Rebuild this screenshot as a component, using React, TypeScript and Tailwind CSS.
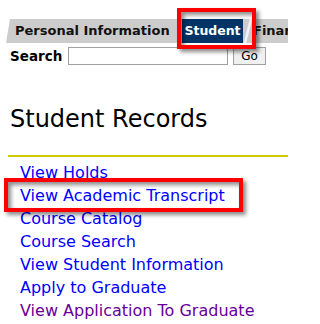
const links = [
  "View Holds",
  "View Academic Transcript",
  "Course Catalog",
  "Course Search",
  "View Student Information",
  "Apply to Graduate",
];

export default function App() {
  return (
    <div className="relative w-[288px] h-[324px] overflow-hidden bg-white font-['DejaVu_Sans',Verdana,sans-serif] text-black">
      {/* Tabs */}
      <div className="mt-[19px] ml-[6px] h-[24px] flex whitespace-nowrap text-[13px] font-bold bg-[#cccccc] [clip-path:polygon(4px_0,100%_0,100%_100%,0_100%)]">
        <div className="w-[176px] shrink-0 pl-[9px] leading-[24px] text-[#111]">Personal Information</div>
        <div className="w-[61px] shrink-0 bg-[#003366] text-white text-[12.5px] text-center leading-[24px]">Student</div>
        <svg width="10" height="24" viewBox="0 0 10 24" className="shrink-0">
          <line x1="8" y1="0" x2="2" y2="24" stroke="#f2f2f2" strokeWidth="2.5" />
        </svg>
        <div className="leading-[24px] text-[#111]">Finance</div>
      </div>

      {/* Search */}
      <div className="mt-[4px] flex items-center h-[18px]">
        <span className="ml-[10px] w-[58px] text-[13.5px] font-bold">Search</span>
        <input className="w-[160px] h-[18px] border border-[#a0a0a0] bg-white" />
        <button className="ml-[5px] w-[33px] h-[18px] border border-[#a0a0a0] bg-[#f0f0f0] text-[12px] leading-[16px] text-black">
          Go
        </button>
      </div>

      <h1 className="mt-[40px] ml-[10px] text-[24px] leading-[29px] font-normal">Student Records</h1>

      <div className="mt-[21px] ml-[8px] h-[2px] bg-[#cccc00]" />

      <ul className="mt-[4px] ml-[20px] text-[16px] leading-[23px]">
        {links.map((l) => (
          <li key={l} className="text-[#0000ff]">{l}</li>
        ))}
        <li className="text-[#660099]">View Application To Graduate</li>
      </ul>

      {/* Highlight boxes */}
      <div className="absolute left-[177px] top-[8px] w-[79px] h-[41px] border-4 border-[#ff0000] shadow-[3px_3px_4px_rgba(0,0,0,0.45),inset_3px_3px_4px_rgba(0,0,0,0.45)]" />
      <div className="absolute left-[4px] top-[178px] w-[239px] h-[34px] border-4 border-[#ff0000] shadow-[3px_3px_4px_rgba(0,0,0,0.45),inset_3px_3px_4px_rgba(0,0,0,0.45)]" />
    </div>
  );
}
